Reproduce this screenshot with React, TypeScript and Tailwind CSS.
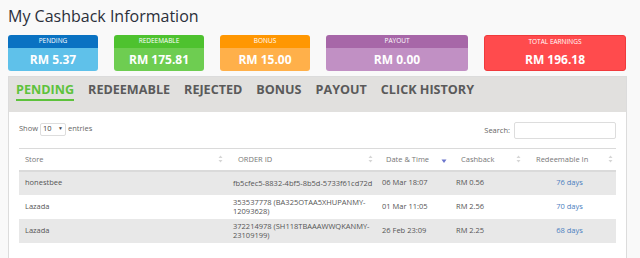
import React from 'react';

const font = { fontFamily: '"Open Sans", "Liberation Sans", sans-serif' };

type Card = { label: string; value: string; head: string; body: string; w: string };

const cards: Card[] = [
    { label: 'PENDING', value: 'RM 5.37', head: 'bg-[#0a72c2]', body: 'bg-[#5fc1ea]', w: 'w-[90px]' },
    { label: 'REDEEMABLE', value: 'RM 175.81', head: 'bg-[#4ec22f]', body: 'bg-[#6ecd51]', w: 'w-[90px]' },
    { label: 'BONUS', value: 'RM 15.00', head: 'bg-[#ff9702]', body: 'bg-[#ffb04a]', w: 'w-[90px]' },
    { label: 'PAYOUT', value: 'RM 0.00', head: 'bg-[#a767a8]', body: 'bg-[#c190c4]', w: 'w-[142px]' },
];

const tabs = ['PENDING', 'REDEEMABLE', 'REJECTED', 'BONUS', 'PAYOUT', 'CLICK HISTORY'];

const rows = [
    { store: 'honestbee', order: ['fb5cfec5-8832-4bf5-8b5d-5733f61cd72d'], date: '06 Mar 18:07', cash: 'RM 0.56', days: '76 days', gray: true },
    { store: 'Lazada', order: ['353537778 (BA325OTAA5XHUPANMY-', '12093628)'], date: '01 Mar 11:05', cash: 'RM 2.56', days: '70 days', gray: false },
    { store: 'Lazada', order: ['372214978 (SH118TBAAAWWQKANMY-', '23109199)'], date: '26 Feb 23:09', cash: 'RM 2.25', days: '68 days', gray: true },
];

const SortBoth = () => (
    <svg width="5" height="8" viewBox="0 0 5 8" className="shrink-0">
        <path d="M2.5 0.5 L4.5 3 L0.5 3 Z" fill="#d6d6d6" />
        <path d="M2.5 7.5 L4.5 5 L0.5 5 Z" fill="#d6d6d6" />
    </svg>
);

const SortDesc = () => (
    <svg width="6" height="8" viewBox="0 0 6 8" className="shrink-0 mt-[4px]">
        <path d="M0.5 2.5 L5.5 2.5 L3 6 Z" fill="#6b75cc" />
    </svg>
);

export default function App() {
    return (
        <div style={font} className="w-[640px] h-[258px] overflow-hidden bg-[#f9f9f9] px-[8px] pt-[5px] text-[#555]">
            <h1 className="text-[16px] leading-[22px] text-[#2b2f3a]">My Cashback Information</h1>

            {/* Summary cards */}
            <div className="mt-[8px] flex gap-[16px]">
                {cards.map(c => (
                    <div key={c.label} className={`${c.w} h-[36px] rounded-[3px] overflow-hidden text-white flex flex-col`}>
                        <div className={`${c.head} h-[13px] flex items-center justify-center text-[6.5px] leading-none`}>{c.label}</div>
                        <div className={`${c.body} flex-1 flex items-center justify-center text-[12px] font-bold leading-none`}>{c.value}</div>
                    </div>
                ))}
                <div className="w-[142px] h-[36px] rounded-[3px] bg-[#ff4b4d] border border-[#f03a3c] text-white flex flex-col items-center">
                    <div className="text-[6.5px] leading-none mt-[3px]">TOTAL EARNINGS</div>
                    <div className="text-[12px] font-bold leading-none mt-[8px]">RM 196.18</div>
                </div>
            </div>

            {/* Panel */}
            <div className="mt-[5px] w-[619px] bg-white border border-[#dcdcdc] h-[200px]">
                <div className="h-[35px] bg-[#e1e0de] flex gap-[14px] pl-[7px] pt-[4px]">
                    {tabs.map((t, i) => (
                        <div
                            key={t}
                            className={`text-[12.6px] font-bold leading-[18px] h-[20px] ${i === 0 ? 'text-[#5dc23c] border-b-2 border-[#5dc23c]' : 'text-[#5a5a5a]'}`}
                        >
                            {t}
                        </div>
                    ))}
                </div>

                <div className="px-[10px] pt-[10px]">
                    <div className="flex justify-between items-start text-[7.5px] text-[#666]">
                        <div className="h-[14px] flex items-center gap-[2px]">
                            <span>Show</span>
                            <div className="w-[26px] h-[13px] border border-[#ddd] rounded-[2px] flex items-center justify-between px-[2px] text-[#444]">
                                <span>10</span>
                                <span className="text-[5px]">▼</span>
                            </div>
                            <span>entries</span>
                        </div>
                        <div className="flex items-center gap-[4px] h-[17px]">
                            <span>Search:</span>
                            <div className="w-[102px] h-[17px] border border-[#ddd] rounded-[2px]" />
                        </div>
                    </div>

                    <table className="mt-[9px] w-[597px] table-fixed border-collapse text-[7.5px]">
                        <colgroup>
                            <col className="w-[208px]" />
                            <col className="w-[150px]" />
                            <col className="w-[74px]" />
                            <col className="w-[74px]" />
                            <col className="w-[91px]" />
                        </colgroup>
                        <thead>
                            <tr className="h-[22px] border-t border-b-2 border-[#dadada] text-[#777] font-normal">
                                <th className="font-normal text-left pl-[6px] pr-[4px]">
                                    <div className="flex items-center justify-between"><span>Store</span><SortBoth /></div>
                                </th>
                                <th className="font-normal text-left pl-[11px] pr-[4px]">
                                    <div className="flex items-center justify-between"><span>ORDER ID</span><SortBoth /></div>
                                </th>
                                <th className="font-normal text-left pl-[9px] pr-[4px]">
                                    <div className="flex items-center justify-between"><span>Date &amp; Time</span><SortDesc /></div>
                                </th>
                                <th className="font-normal text-left pl-[10px] pr-[4px]">
                                    <div className="flex items-center justify-between"><span>Cashback</span><SortBoth /></div>
                                </th>
                                <th className="font-normal text-left pl-[11px] pr-[3px]">
                                    <div className="flex items-center justify-between"><span>Redeemable In</span><SortBoth /></div>
                                </th>
                            </tr>
                        </thead>
                        <tbody>
                            {rows.map((r, i) => (
                                <tr key={i} className={`h-[24px] ${r.gray ? 'bg-[#e8e8e8]' : 'bg-white'}`}>
                                    <td className="pl-[6px]">{r.store}</td>
                                    <td className="pl-[6px] leading-[9px] whitespace-nowrap">
                                        {r.order.map((l, j) => <div key={j}>{l}</div>)}
                                    </td>
                                    <td className="pl-[5px]">{r.date}</td>
                                    <td className="pl-[5px]">{r.cash}</td>
                                    <td className="text-center text-[#4a7ec0] pr-[2px]">{r.days}</td>
                                </tr>
                            ))}
                        </tbody>
                    </table>
                </div>
            </div>
        </div>
    );
}
